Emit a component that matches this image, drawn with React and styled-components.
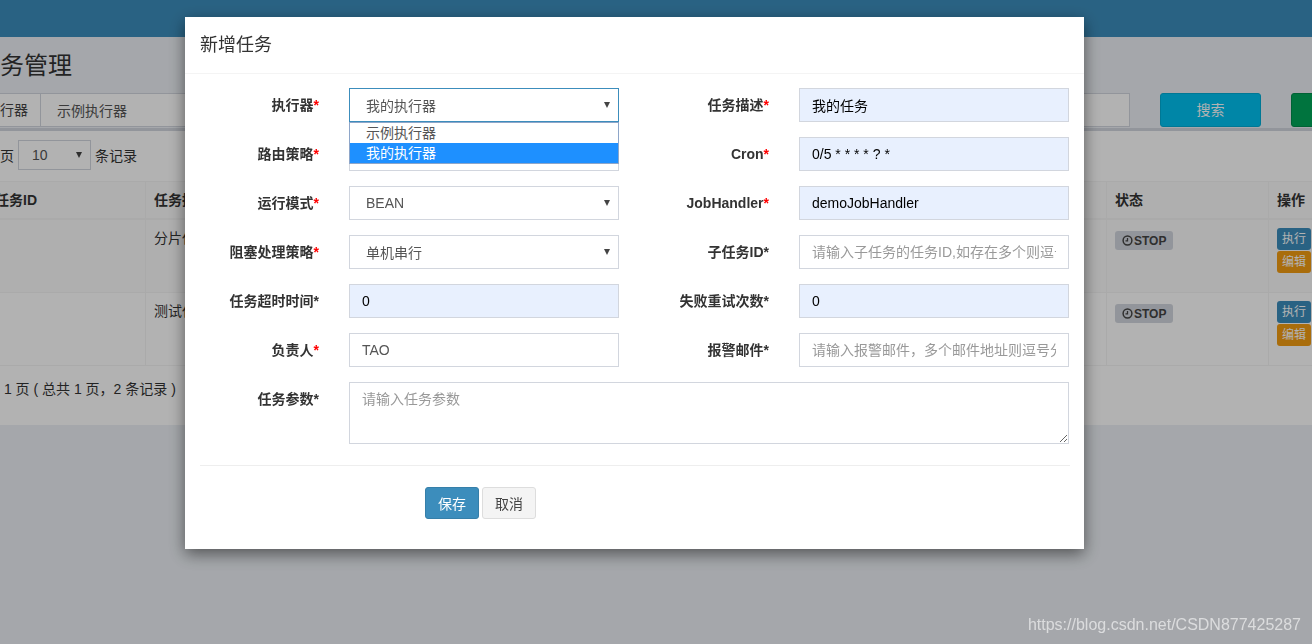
import React from "react";
import styled, { createGlobalStyle } from "styled-components";

const GlobalStyle = createGlobalStyle`
  html, body {
    margin: 0;
    padding: 0;
    height: 100%;
    overflow: hidden;
  }
  body {
    font-family: "Liberation Sans", "Noto Sans CJK SC", sans-serif;
    font-size: 14px;
    color: #333;
    background: #ecf0f5;
  }
  * {
    box-sizing: border-box;
  }
`;

// ---------- background page ----------

const Page = styled.div`
  width: 1600px;
  height: 644px;
  margin-left: -39px;
  background: #ecf0f5;
`;

const TopBar = styled.div`
  height: 37px;
  background: #3c8dbc;
`;

const Content = styled.div`
  padding: 12px 15px 0;
`;

const PageTitle = styled.h1`
  margin: 0;
  font-size: 24px;
  font-weight: 400;
  line-height: 34px;
  color: #333;
`;

const SearchRow = styled.div`
  display: flex;
  height: 34px;
  margin: 10px 0 0 -3px;
`;

const Addon = styled.div`
  width: 68px;
  border: 1px solid #d2d6de;
  background: #fff;
  padding: 0 12px;
  line-height: 32px;
  color: #444;
  white-space: nowrap;
`;

const FakeSelect = styled.div`
  display: flex;
  align-items: center;
  width: ${(p) => p.width || "100%"};
  height: ${(p) => p.height || "34px"};
  padding: 0 8px 0 ${(p) => p.padLeft || "16px"};
  border: 1px solid ${(p) => (p.focused ? "#3c8dbc" : "#d2d6de")};
  border-left-width: ${(p) => (p.joined ? "0" : "1px")};
  background: #fff;
  color: #555;
  font-size: 14px;
  white-space: nowrap;
  overflow: hidden;
`;

const SelectText = styled.span`
  flex: 1;
`;

const Caret = styled.span`
  width: 0;
  height: 0;
  border-left: 3.5px solid transparent;
  border-right: 3.5px solid transparent;
  border-top: 6px solid #444;
`;

const KeywordInput = styled.div`
  width: 260px;
  margin-left: 599px;
  border: 1px solid #d2d6de;
  background: #fff;
  flex-shrink: 0;
`;

const SearchButton = styled.div`
  width: 101px;
  margin-left: 30px;
  flex-shrink: 0;
  border-radius: 3px;
  background: ${(p) => p.bg};
  border: 1px solid ${(p) => p.edge};
  color: #fff;
  line-height: 32px;
  text-align: center;
`;

const Box = styled.div`
  margin-top: 1px;
  border-top: 3px solid #d2d6de;
  background: #fff;
  padding: 9px 10px 26px;
`;

const LengthRow = styled.div`
  display: flex;
  align-items: center;
  gap: 4px;
  height: 30px;
  color: #333;
`;

const TableRow = styled.div`
  display: grid;
  grid-template-columns: 159px 300px 661px 162px 200px;
  height: ${(p) => p.height};
  border-top: ${(p) => (p.head ? "1px solid #f4f4f4" : "0")};
  border-bottom: ${(p) => (p.head ? "2px" : "1px")} solid #f4f4f4;
  background: ${(p) => p.bg || "#fff"};
`;

const TableRows = styled.div`
  margin-top: 11px;
`;

const Cell = styled.div`
  padding: ${(p) => (p.head ? "0 8px" : "8px")};
  line-height: ${(p) => (p.head ? "36px" : "20px")};
  font-weight: ${(p) => (p.head ? 700 : 400)};
  border-left: 1px solid #f4f4f4;
  white-space: nowrap;
  overflow: hidden;
  display: flex;
  flex-direction: column;
  align-items: flex-start;
  gap: 1px;
`;

const IdLink = styled.span`
  margin-left: -3px;
  color: #3c8dbc;
`;

const StatusBadge = styled.span`
  display: inline-flex;
  align-items: center;
  gap: 1px;
  margin-top: 3px;
  padding: 0 7px;
  height: 19px;
  border-radius: 3px;
  background: #d2d6de;
  color: #444;
  font-size: 12px;
  font-weight: 700;
`;

const SmallButton = styled.span`
  display: inline-block;
  height: 22px;
  padding: 0 5px;
  border-radius: 3px;
  background: ${(p) => p.bg};
  color: #fff;
  font-size: 12px;
  line-height: 22px;
`;

const Footer = styled.div`
  margin-top: 13px;
  line-height: 20px;
  color: #333;
`;

// ---------- modal ----------

const Overlay = styled.div`
  position: fixed;
  inset: 0;
  background: rgba(0, 0, 0, 0.3);
`;

const Modal = styled.div`
  position: fixed;
  top: 17px;
  left: 185px;
  width: 899px;
  background: #fff;
  box-shadow: 0 5px 15px rgba(0, 0, 0, 0.5);
`;

const ModalHeader = styled.div`
  padding: 15px;
  border-bottom: 1px solid #f4f4f4;
`;

const ModalTitle = styled.h4`
  margin: 0;
  font-size: 18px;
  font-weight: 400;
  line-height: 26px;
  color: #333;
`;

const ModalBody = styled.div`
  padding: 14px 0 30px;
`;

const FormGrid = styled.div`
  display: grid;
  grid-template-columns: 149px 300px 150px 300px;
  row-gap: 15px;
`;

const Label = styled.label`
  padding-right: 15px;
  text-align: right;
  font-weight: 700;
  line-height: 34px;
  color: #333;
  white-space: nowrap;
`;

const Star = styled.span`
  color: ${(p) => (p.red ? "#f00" : "#333")};
`;

const Field = styled.div`
  position: relative;
  padding: 0 15px;
  grid-column: ${(p) => p.span || "auto"};
`;

const TextInput = styled.input`
  display: block;
  width: 100%;
  height: 34px;
  padding: 6px 12px;
  border: 1px solid #d2d6de;
  border-radius: 0;
  background: ${(p) => (p.filled ? "#e8f0fe" : "#fff")};
  color: ${(p) => (p.filled ? "#000" : "#555")};
  font-family: inherit;
  font-size: 14px;
  outline: none;
  &::placeholder {
    color: #999;
  }
`;

const TextArea = styled.textarea`
  display: block;
  width: 100%;
  height: 62px;
  padding: 6px 12px;
  border: 1px solid #d2d6de;
  border-radius: 0;
  font-family: inherit;
  font-size: 14px;
  line-height: 20px;
  outline: none;
  &::placeholder {
    color: #999;
  }
`;

const Dropdown = styled.div`
  position: absolute;
  top: 34px;
  left: 15px;
  right: 15px;
  z-index: 2;
  border: 1px solid #8ea6c9;
  background: #fff;
`;

const Option = styled.div`
  height: 20px;
  padding-left: 16px;
  line-height: 20px;
  font-size: 14px;
  background: ${(p) => (p.selected ? "#1e90ff" : "#fff")};
  color: ${(p) => (p.selected ? "#fff" : "#555")};
`;

const Divider = styled.div`
  height: 1px;
  margin: 21px 14px 21px 15px;
  background: #eee;
`;

const ButtonRow = styled.div`
  display: flex;
  gap: 3px;
  padding-left: 240px;
`;

const Button = styled.button`
  width: 54px;
  height: 32px;
  padding: 0;
  border-radius: 3px;
  border: 1px solid ${(p) => (p.primary ? "#367fa9" : "#ddd")};
  background: ${(p) => (p.primary ? "#3c8dbc" : "#f4f4f4")};
  color: ${(p) => (p.primary ? "#fff" : "#444")};
  font-family: inherit;
  font-size: 14px;
`;

const Watermark = styled.div`
  position: fixed;
  right: 11px;
  bottom: 10px;
  font-family: "Liberation Sans", sans-serif;
  font-size: 16px;
  color: rgba(255, 255, 255, 0.6);
`;

function Clock() {
  return (
    <svg width="11" height="11" viewBox="0 0 12 12">
      <circle cx="6" cy="6" r="4.8" fill="none" stroke="#444" strokeWidth="1.6" />
      <path d="M6 3.2V6.3H3.8" fill="none" stroke="#444" strokeWidth="1.4" />
    </svg>
  );
}

function Select({ value, focused }) {
  return (
    <FakeSelect focused={focused}>
      <SelectText>{value}</SelectText>
      <Caret />
    </FakeSelect>
  );
}

const jobs = [
  { id: "1", desc: "分片任务" },
  { id: "", desc: "测试任务" },
];

function App() {
  return (
    <>
      <GlobalStyle />
      <Page>
        <TopBar />
        <Content>
          <PageTitle>任务管理</PageTitle>
          <SearchRow>
            <Addon>执行器</Addon>
            <FakeSelect width="230px" joined>
              <SelectText>示例执行器</SelectText>
            </FakeSelect>
            <KeywordInput />
            <SearchButton bg="#00c0ef" edge="#00acd6">
              搜索
            </SearchButton>
            <SearchButton bg="#00a65a" edge="#008d4c" />
          </SearchRow>
          <Box>
            <LengthRow>
              <span>每页</span>
              <FakeSelect width="73px" height="30px" padLeft="13px">
                <SelectText>10</SelectText>
                <Caret />
              </FakeSelect>
              <span>条记录</span>
            </LengthRow>
            <TableRows>
              <TableRow head height="39px" bg="#fbfbfb">
                <Cell head>任务ID</Cell>
                <Cell head>任务描述</Cell>
                <Cell head>Cron</Cell>
                <Cell head>状态</Cell>
                <Cell head>操作</Cell>
              </TableRow>
              {jobs.map((job, i) => (
                <TableRow key={job.desc} height="73px" bg={i === 0 ? "#fbfbfb" : "#fff"}>
                  <Cell>
                    <IdLink>{job.id}</IdLink>
                  </Cell>
                  <Cell>{job.desc}</Cell>
                  <Cell />
                  <Cell>
                    <StatusBadge>
                      <Clock />
                      STOP
                    </StatusBadge>
                  </Cell>
                  <Cell>
                    <SmallButton bg="#3c8dbc">执行</SmallButton>
                    <SmallButton bg="#f39c12">编辑</SmallButton>
                  </Cell>
                </TableRow>
              ))}
            </TableRows>
            <Footer>第 1 页 ( 总共 1 页，2 条记录 )</Footer>
          </Box>
        </Content>
      </Page>

      <Overlay />

      <Modal>
        <ModalHeader>
          <ModalTitle>新增任务</ModalTitle>
        </ModalHeader>
        <ModalBody>
          <FormGrid>
            <Label>
              执行器<Star red>*</Star>
            </Label>
            <Field>
              <Select value="我的执行器" focused />
              <Dropdown>
                <Option>示例执行器</Option>
                <Option selected>我的执行器</Option>
              </Dropdown>
            </Field>
            <Label>
              任务描述<Star red>*</Star>
            </Label>
            <Field>
              <TextInput filled readOnly value="我的任务" />
            </Field>

            <Label>
              路由策略<Star red>*</Star>
            </Label>
            <Field>
              <Select value="" />
            </Field>
            <Label>
              Cron<Star red>*</Star>
            </Label>
            <Field>
              <TextInput filled readOnly value="0/5 * * * * ? *" />
            </Field>

            <Label>
              运行模式<Star red>*</Star>
            </Label>
            <Field>
              <Select value="BEAN" />
            </Field>
            <Label>
              JobHandler<Star red>*</Star>
            </Label>
            <Field>
              <TextInput filled readOnly value="demoJobHandler" />
            </Field>

            <Label>
              阻塞处理策略<Star red>*</Star>
            </Label>
            <Field>
              <Select value="单机串行" />
            </Field>
            <Label>
              子任务ID<Star>*</Star>
            </Label>
            <Field>
              <TextInput readOnly placeholder="请输入子任务的任务ID,如存在多个则逗号分隔" />
            </Field>

            <Label>
              任务超时时间<Star>*</Star>
            </Label>
            <Field>
              <TextInput filled readOnly value="0" />
            </Field>
            <Label>
              失败重试次数<Star>*</Star>
            </Label>
            <Field>
              <TextInput filled readOnly value="0" />
            </Field>

            <Label>
              负责人<Star red>*</Star>
            </Label>
            <Field>
              <TextInput readOnly value="TAO" />
            </Field>
            <Label>
              报警邮件<Star>*</Star>
            </Label>
            <Field>
              <TextInput readOnly placeholder="请输入报警邮件，多个邮件地址则逗号分隔" />
            </Field>

            <Label>
              任务参数<Star>*</Star>
            </Label>
            <Field span="2 / span 3">
              <TextArea readOnly placeholder="请输入任务参数" />
            </Field>
          </FormGrid>
          <Divider />
          <ButtonRow>
            <Button primary>保存</Button>
            <Button>取消</Button>
          </ButtonRow>
        </ModalBody>
      </Modal>

      <Watermark>https://blog.csdn.net/CSDN877425287</Watermark>
    </>
  );
}

export default App;
